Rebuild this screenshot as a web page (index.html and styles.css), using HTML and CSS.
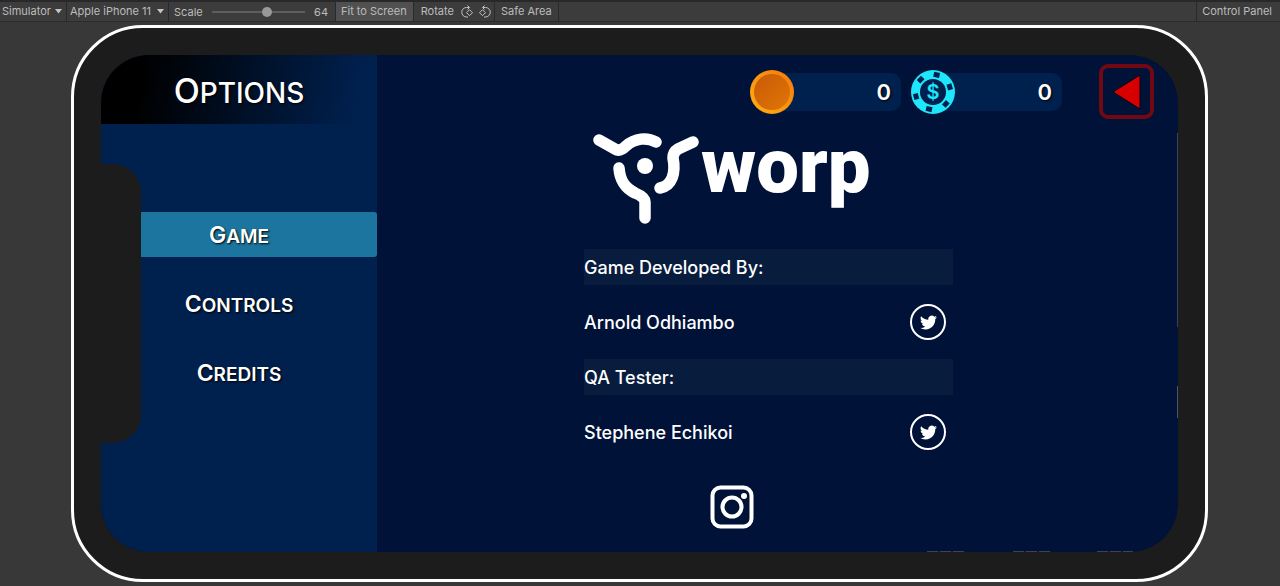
FILE: index.html
```html
<!DOCTYPE html>
<html lang="en">
<head>
<meta charset="utf-8">
<title>Simulator</title>
<link rel="stylesheet" href="styles.css">
</head>
<body>
<header class="toolbar">
  <div class="picker picker-mode">
    <select class="picker-select" aria-label="View mode"><option>Simulator</option></select>
    <svg class="picker-arrow" viewBox="0 0 7 5" aria-hidden="true"><path d="M0 0h7L3.500 4.500z"/></svg>
  </div>
  <div class="picker picker-device">
    <select class="picker-select" aria-label="Device"><option>Apple iPhone 11</option></select>
    <svg class="picker-arrow" viewBox="0 0 7 5" aria-hidden="true"><path d="M0 0h7L3.500 4.500z"/></svg>
  </div>
  <div class="scale">
    <label for="scale">Scale</label>
    <input class="scale-range" id="scale" type="range" min="0" max="100" value="60">
    <output for="scale">64</output>
  </div>
  <button class="tool tool-active" type="button">Fit to Screen</button>
  <div class="rotate">
    <span>Rotate</span>
    <button class="rotate-button" type="button" aria-label="Rotate clockwise">
      <svg viewBox="0 0 14 14"><path d="M9 2.500H6.500a4.700 4.700 0 0 0 0 9.500H8M7.500.5l2 2-2 2M9.500 4.700l3 3-3 3-3-3z"/></svg>
    </button>
    <button class="rotate-button" type="button" aria-label="Rotate counterclockwise">
      <svg viewBox="0 0 14 14"><path d="M5 2.500h2.500a4.700 4.700 0 0 1 0 9.500H6M6.500.5l-2 2 2 2M4.500 4.700l3 3-3 3-3-3z"/></svg>
    </button>
  </div>
  <button class="tool" type="button">Safe Area</button>
  <button class="tool tool-end" type="button">Control Panel</button>
</header>

<div class="stage">
  <div class="phone">
    <div class="screen">
      <aside class="sidebar">
        <h1 class="title">Options</h1>
        <nav class="menu">
          <button class="menu-item menu-item-active" type="button"><span class="caps">Game</span></button>
          <button class="menu-item" type="button"><span class="caps">Controls</span></button>
          <button class="menu-item" type="button"><span class="caps">Credits</span></button>
        </nav>
      </aside>

      <main class="main">
        <div class="status">
          <div class="balance">
            <svg class="balance-icon" viewBox="0 0 44 44" aria-hidden="true">
              <defs>
                <linearGradient id="rim" x1="1" y1="0" x2="0" y2="1"><stop offset="0" stop-color="#f57a0c"/><stop offset="1" stop-color="#ffae12"/></linearGradient>
                <linearGradient id="face" x1="0" y1="0" x2="1" y2="1"><stop offset="0" stop-color="#c85a05"/><stop offset="1" stop-color="#e07606"/></linearGradient>
              </defs>
              <circle cx="22" cy="22" r="22" fill="url(#rim)"/>
              <circle cx="22" cy="22" r="18" fill="url(#face)"/>
            </svg>
            <span class="balance-value">0</span>
          </div>
          <div class="balance">
            <svg class="balance-icon" viewBox="0 0 44 44" aria-hidden="true">
              <circle cx="22" cy="22" r="22" fill="#1ee6fb"/>
              <circle cx="22" cy="22" r="13" fill="#00204e"/>
              <g fill="#00204e">
                <rect x="-3" y="-20" width="6" height="5" transform="translate(22 22) rotate(12)"/>
                <rect x="-3" y="-20" width="6" height="5" transform="translate(22 22) rotate(73)"/>
                <rect x="-3" y="-20" width="6" height="5" transform="translate(22 22) rotate(133)"/>
                <rect x="-3" y="-20" width="6" height="5" transform="translate(22 22) rotate(193)"/>
                <rect x="-3" y="-20" width="6" height="5" transform="translate(22 22) rotate(255)"/>
                <rect x="-3" y="-20" width="6" height="5" transform="translate(22 22) rotate(315)"/>
              </g>
              <text class="chip-sign" x="22" y="29" text-anchor="middle">$</text>
            </svg>
            <span class="balance-value">0</span>
          </div>
          <button class="back" type="button" aria-label="Back">
            <svg class="back-arrow" viewBox="0 0 30 36"><path d="M1 18L28 1v34z"/></svg>
          </button>
        </div>

        <section class="credits">
          <div class="brand">
            <svg class="brand-mark" viewBox="0 0 108 92" aria-hidden="true">
              <g fill="none" stroke="#fff" stroke-width="11.500" stroke-linecap="round" stroke-linejoin="round">
                <path d="M6 7L22 16Q27 19 33 13C42 5 54 4 63 9"/>
                <path d="M26 35C27 48 32 55 42 60Q52 64 52 69V85"/>
                <path d="M100 9L85 16Q80 19 80 25C83 40 79 53 67 55"/>
              </g>
              <circle cx="52" cy="33" r="8" fill="#fff"/>
            </svg>
            <span class="brand-name">worp</span>
          </div>

          <div class="roles">
            <h2 class="row row-heading">Game Developed By:</h2>
            <div class="row">
              <span>Arnold Odhiambo</span>
              <a class="twitter" href="#" aria-label="Arnold Odhiambo on Twitter">
                <svg viewBox="0 0 24 24"><path d="M23.950 4.570a10 10 0 0 1-2.820.770 4.960 4.960 0 0 0 2.160-2.720c-.95.550-2 .950-3.130 1.180a4.920 4.920 0 0 0-8.380 4.480C7.690 8.100 4.070 6.130 1.640 3.160a4.920 4.920 0 0 0 1.520 6.570 4.900 4.900 0 0 1-2.230-.61v.06c0 2.380 1.700 4.370 3.950 4.820a5 5 0 0 1-2.210.080 4.940 4.940 0 0 0 4.600 3.420A9.870 9.870 0 0 1 0 19.540a14 14 0 0 0 7.550 2.210c9.060 0 14-7.500 14-13.980 0-.21 0-.42-.02-.63a9.940 9.940 0 0 0 2.420-2.570z"/></svg>
              </a>
            </div>
            <h2 class="row row-heading">QA Tester:</h2>
            <div class="row">
              <span>Stephene Echikoi</span>
              <a class="twitter" href="#" aria-label="Stephene Echikoi on Twitter">
                <svg viewBox="0 0 24 24"><path d="M23.950 4.570a10 10 0 0 1-2.820.770 4.960 4.960 0 0 0 2.160-2.720c-.95.550-2 .950-3.130 1.180a4.920 4.920 0 0 0-8.380 4.480C7.690 8.100 4.070 6.130 1.640 3.160a4.920 4.920 0 0 0 1.520 6.570 4.900 4.900 0 0 1-2.230-.61v.06c0 2.380 1.700 4.370 3.950 4.820a5 5 0 0 1-2.210.080 4.940 4.940 0 0 0 4.600 3.420A9.870 9.870 0 0 1 0 19.540a14 14 0 0 0 7.550 2.210c9.060 0 14-7.500 14-13.980 0-.21 0-.42-.02-.63a9.940 9.940 0 0 0 2.420-2.570z"/></svg>
              </a>
            </div>
          </div>

          <a class="instagram" href="#" aria-label="Instagram">
            <svg viewBox="0 0 44 44"><rect x="2.500" y="2.500" width="39" height="39" rx="8"/><circle cx="22" cy="22" r="9.500"/><circle class="lens" cx="34" cy="11" r="3"/></svg>
          </a>
        </section>
      </main>
      <div class="notch"></div>
      <div class="edge"></div>
    </div>
  </div>
</div>
</body>
</html>
```
FILE: styles.css
```css
* {
  box-sizing: border-box;
}

body {
  margin: 0;
  min-height: 100vh;
  display: flex;
  flex-direction: column;
  background: #383838;
  color: #fff;
  font-family: Inter, "Liberation Sans", sans-serif;
}

button,
select {
  margin: 0;
  border: 0;
  background: none;
  color: inherit;
  font: inherit;
}

svg {
  display: block;
}

/* Editor toolbar */
.toolbar {
  display: flex;
  height: 22px;
  border-top: 2px solid #282828;
  border-bottom: 1px solid #2b2b2b;
  background: #3c3c3c;
  color: #bcbcbc;
  font-size: 11px;
  line-height: 19px;
}

.picker {
  position: relative;
  border-right: 1px solid #292929;
}

.picker-mode {
  width: 67px;
}

.picker-device {
  width: 102px;
}

.picker-select {
  display: block;
  width: 100%;
  height: 19px;
  padding: 0 0 0 3px;
  appearance: none;
}

.picker-mode .picker-select {
  padding-left: 2px;
}

.picker-arrow {
  position: absolute;
  right: 4px;
  top: 7px;
  width: 7px;
  height: 5px;
  fill: #c4c4c4;
  pointer-events: none;
}

.scale {
  display: flex;
  align-items: center;
  width: 166px;
  padding: 1px 7px 0 5px;
  gap: 9px;
}

.scale output {
  margin-left: auto;
}

.scale-range {
  width: 93px;
  height: 10px;
  margin: 0;
  appearance: none;
  background: linear-gradient(#5e5e5e, #5e5e5e) center / 100% 2px no-repeat;
}

.scale-range::-webkit-slider-thumb {
  appearance: none;
  width: 10px;
  height: 10px;
  border-radius: 50%;
  background: #999;
}

.tool {
  padding: 0 6px;
  border-right: 1px solid #292929;
}

.tool-active {
  border-left: 1px solid #292929;
  padding: 0 6px 0 5px;
  background: #505050;
}

.tool-end {
  margin-left: auto;
  padding: 0 8px 0 5px;
  border-right: 0;
  border-left: 1px solid #292929;
}

.rotate {
  display: flex;
  align-items: center;
  gap: 4px;
  padding: 0 2px 0 7px;
  border-right: 1px solid #292929;
}

.rotate > span {
  margin-right: 2px;
}

.rotate-button {
  padding: 0;
}

.rotate-button svg {
  width: 14px;
  height: 14px;
  fill: none;
  stroke: #c4c4c4;
}

/* Device frame */
.stage {
  flex: 1;
  display: flex;
  padding: 3px 72px 4px 71px;
}

.phone {
  flex: 1;
  display: flex;
  padding: 27px;
  border: 3px solid #fff;
  border-radius: 72px;
  background: #1c1c1c;
}

.screen {
  position: relative;
  flex: 1;
  display: flex;
  overflow: hidden;
  border-radius: 48px;
  background: #001238;
}

.notch {
  position: absolute;
  left: 0;
  top: 22%;
  bottom: 22%;
  width: 40px;
  border-radius: 0 28px 28px 0;
  background: #1c1c1c;
}

/* Sliver of the scene behind the panel */
.edge {
  position: absolute;
  inset: 0;
  pointer-events: none;
  background:
    linear-gradient(#3a4356, #3a4356) right 0 top 78px / 1px 194px no-repeat,
    linear-gradient(#4d5464, #4d5464) right 0 top 331px / 1px 32px no-repeat,
    repeating-linear-gradient(90deg, #3c4354 0 11px, #1c1c1c 11px 13px) right 213px bottom 0 / 38px 1px no-repeat,
    repeating-linear-gradient(90deg, #3c4354 0 11px, #1c1c1c 11px 13px) right 127px bottom 0 / 38px 1px no-repeat,
    repeating-linear-gradient(90deg, #3c4354 0 11px, #1c1c1c 11px 13px) right 45px bottom 0 / 36px 1px no-repeat;
}

/* Sidebar */
.sidebar {
  width: 276px;
  background: #00204e;
}

.title {
  margin: 0;
  height: 69px;
  background: linear-gradient(100deg, #000 15%, #00204e 92%);
  font-size: 28px;
  font-weight: 500;
  line-height: 72px;
  text-align: center;
  text-transform: uppercase;
  text-shadow: 1px 1px 2px #000;
}

.title::first-letter {
  font-size: 34px;
}

.menu {
  display: flex;
  flex-direction: column;
  gap: 24px;
  margin-top: 88px;
}

.menu-item {
  height: 45px;
  padding: 0;
  border-radius: 3px;
  font-size: 19px;
  font-weight: 600;
  line-height: 46px;
  text-shadow: 1px 1px 2px #000;
}

.menu-item-active {
  background: #1b759e;
}

.caps {
  display: block;
  text-transform: uppercase;
}

.caps::first-letter {
  font-size: 23px;
}

/* Main panel */
.main {
  flex: 1;
  display: flex;
  flex-direction: column;
}

.status {
  display: flex;
  justify-content: flex-end;
  align-items: center;
  gap: 10px;
  padding: 9px 24px 0 0;
}

.balance {
  display: flex;
  align-items: center;
  justify-content: space-between;
  width: 151px;
  height: 38px;
  padding-right: 10px;
  border-radius: 10px;
  background: linear-gradient(#00204e, #00204e) right / 129px 100% no-repeat;
}

.balance-icon {
  width: 44px;
  height: 44px;
}

.balance-value {
  font-size: 22px;
  font-weight: 600;
  text-shadow: 1px 1px 2px #000;
}

.chip-sign {
  fill: #1ee6fb;
  font-size: 20px;
  font-weight: 600;
}

.back {
  display: flex;
  align-items: center;
  justify-content: center;
  width: 55px;
  height: 55px;
  margin-left: 27px;
  padding: 0;
  border: 4px solid #700914;
  border-radius: 9px;
}

.back-arrow {
  width: 30px;
  height: 36px;
  fill: #d60000;
  stroke: #100010;
  stroke-width: 1;
}

.credits {
  display: flex;
  flex-direction: column;
  padding: 14px 225px 0 207px;
}

.brand {
  display: flex;
  height: 91px;
  padding-left: 9px;
}

.brand-mark {
  width: 108px;
  height: 92px;
}

.brand-name {
  font-family: Roboto, "Liberation Sans", sans-serif;
  font-size: 76px;
  font-weight: 900;
  line-height: 66px;
}

.roles {
  display: flex;
  flex-direction: column;
  gap: 19px;
  margin-top: 25px;
}

.row {
  display: flex;
  align-items: center;
  justify-content: space-between;
  height: 36px;
  margin: 0;
  padding-right: 7px;
  font-size: 18px;
  font-weight: 500;
}

.row-heading {
  background: #081c3e;
}

.twitter {
  display: flex;
  align-items: center;
  justify-content: center;
  width: 36px;
  height: 36px;
  border: 2px solid #fff;
  border-radius: 50%;
}

.twitter svg {
  width: 17px;
  height: 17px;
  fill: #fff;
}

.instagram {
  width: 44px;
  margin: 35px 0 0 126px;
}

.instagram svg {
  width: 44px;
  height: 44px;
  fill: none;
  stroke: #fff;
  stroke-width: 4;
}

.instagram .lens {
  fill: #fff;
  stroke: none;
}
```
